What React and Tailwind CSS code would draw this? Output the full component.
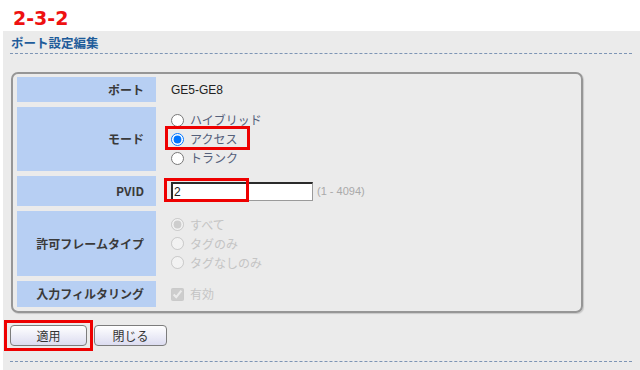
const jp = { fontFamily: '"Noto Sans CJK JP", "Noto Sans", sans-serif' }

function Radio({ checked, disabled, label }) {
  return (
    <label className={`flex items-center gap-[6px] h-[19px] ${disabled ? 'text-[#c4c4c4]' : 'text-[#55607a]'}`}>
      <input type="radio" checked={checked} disabled={disabled} readOnly className="m-0 w-[13px] h-[13px]" />
      <span className="text-[12px] leading-none">{label}</span>
    </label>
  )
}

function Row({ label, h, children, center = true }) {
  return (
    <div className="flex" style={{ height: h }}>
      <div className="w-[139px] bg-[#b7cff3] flex items-center justify-end pr-[12px] text-[12px] font-bold text-[#3a3a3a]">
        {label}
      </div>
      <div className={`flex-1 pl-[15px] flex ${center ? 'items-center' : 'flex-col justify-center'}`}>{children}</div>
    </div>
  )
}

export default function App() {
  return (
    <div className="w-[640px] h-[370px] bg-white overflow-hidden" style={jp}>
      <div className="h-[31px] pl-[13px] pt-[8px] text-[19px] leading-[21px] font-bold text-[#ee1111]" style={{ fontFamily: '"DejaVu Sans", sans-serif' }}>
        2-3-2
      </div>

      <div className="ml-[3px] h-[339px] bg-[#ebebeb] pt-[3px]">
        <div className="mx-[7px] w-[622px] h-[20px] border-b border-dashed border-[#7d95b5] pl-[1px] text-[12.5px] leading-[18px] font-bold text-[#1f5c9a]">
          ポート設定編集
        </div>

        <div className="ml-[8px] mt-[18px] w-[572px] border-2 border-[#969696] rounded-[7px] px-[4px] pt-[3px] pb-[4px] flex flex-col gap-[5px] shadow-[1px_1px_1px_rgba(0,0,0,0.15)]">
          <Row label="ポート" h={25}>
            <span className="text-[12px] text-[#222]" style={{ fontFamily: '"Liberation Sans", Arial, sans-serif' }}>GE5-GE8</span>
          </Row>
          <Row label="モード" h={64} center={false}>
            <Radio label="ハイブリッド" />
            <div className="relative">
              <Radio checked label="アクセス" />
              <div className="absolute left-[-6px] top-[-4px] w-[85px] h-[24px] border-[3px] border-[#ee0000]" />
            </div>
            <Radio label="トランク" />
          </Row>
          <Row label="PVID" h={30}>
            <div className="relative flex items-center">
              <div className="w-[142px] h-[19px] bg-white border-t-2 border-l-2 border-[#2a2a2a] border-r border-b border-r-[#9a9a9a] border-b-[#9a9a9a] text-[12px] leading-[16px] pl-[1px] text-[#222]" style={{ fontFamily: '"Liberation Sans", Arial, sans-serif' }}>
                2
              </div>
              <span className="ml-[4px] text-[11px] text-[#a9a9a9]" style={{ fontFamily: '"Liberation Sans", Arial, sans-serif' }}>(1 - 4094)</span>
              <div className="absolute left-[-7px] top-[-4px] w-[85px] h-[24px] border-[3px] border-[#ee0000]" />
            </div>
          </Row>
          <Row label="許可フレームタイプ" h={65} center={false}>
            <Radio checked disabled label="すべて" />
            <Radio disabled label="タグのみ" />
            <Radio disabled label="タグなしのみ" />
          </Row>
          <Row label="入力フィルタリング" h={26}>
            <label className="flex items-center gap-[6px] text-[12px] text-[#c4c4c4]">
              <input type="checkbox" checked disabled readOnly className="m-0 w-[13px] h-[13px]" />
              有効
            </label>
          </Row>
        </div>

        <div className="ml-[7px] mt-[12px] flex items-start gap-[7px]">
          <div className="relative">
            <button className="block w-[77px] h-[21px] rounded-[4px] border border-[#7c7c7c] bg-gradient-to-b from-white to-[#dcdcf0] text-[12px] leading-[18px] text-[#333]">
              適用
            </button>
            <div className="absolute left-[-6px] top-[-5px] w-[89px] h-[31px] border-[3px] border-[#ee0000]" />
          </div>
          <button className="block w-[73px] h-[21px] rounded-[4px] border border-[#7c7c7c] bg-gradient-to-b from-white to-[#dcdcf0] text-[12px] leading-[18px] text-[#333]">
            閉じる
          </button>
        </div>

        <div className="mx-[7px] mt-[15px] w-[622px] border-b border-dashed border-[#7d95b5]" />
      </div>
    </div>
  )
}
